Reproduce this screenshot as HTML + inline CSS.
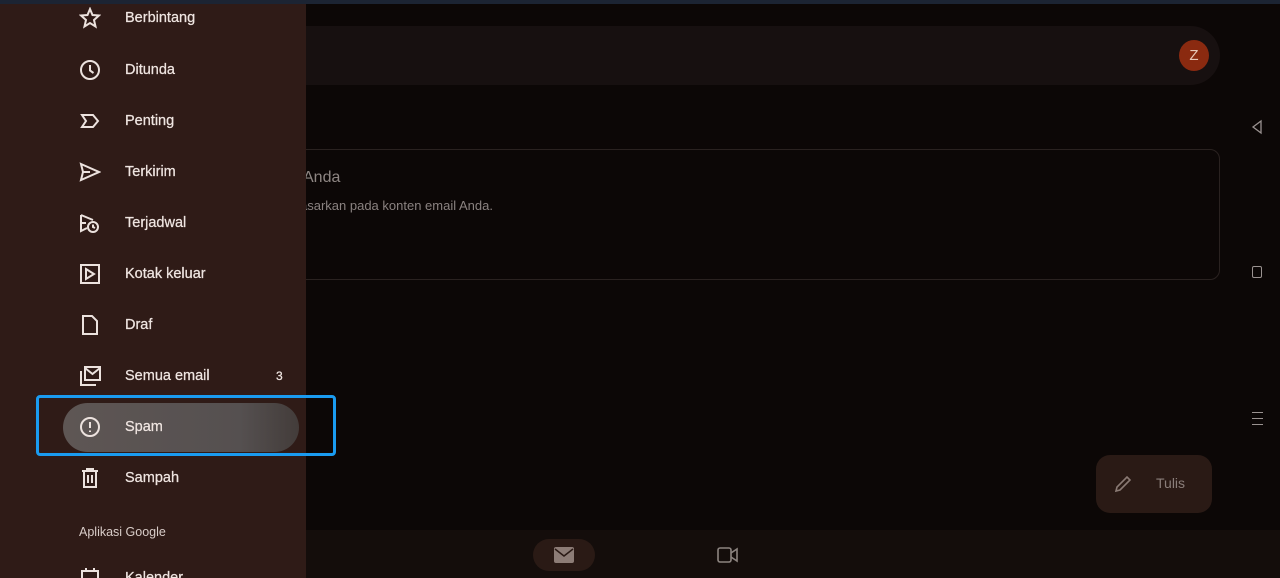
<!DOCTYPE html>
<html style="overflow:hidden"><head><meta charset="utf-8"><style>
*{margin:0;padding:0;box-sizing:border-box}
html,body{width:1280px;height:578px;overflow:hidden}
body{background:#0c0706;font-family:"Liberation Sans",sans-serif;position:relative}
.top{position:absolute;left:0;top:0;width:1280px;height:4px;background:#1c2433;z-index:2}
.side{position:absolute;left:0;top:4px;width:306px;height:574px;background:#2f1b17;overflow:hidden}
.it{position:absolute;left:125px;font-size:14.5px;color:#efe5e1;transform:translateY(-50%);-webkit-text-stroke:0.25px #efe5e1}
.ic{position:absolute;left:79px;width:22px;height:22px;transform:translateY(-50%)}
.ic *{fill:none;stroke:#ece2de;stroke-width:2}
</style></head><body>
<div class="top"></div>
<div style="position:absolute;left:306px;top:26px;width:914px;height:59px;background:#171010;border-radius:0 30px 30px 0"></div>
<div style="position:absolute;left:1179px;top:40px;width:30px;height:31px;border-radius:50%;background:#8a2a10;color:#e8c8b8;font-size:15px;text-align:center;line-height:31px">Z</div>
<div style="position:absolute;left:290px;top:149px;width:930px;height:131px;border:1px solid #2a2220;border-radius:10px"></div>
<div style="position:absolute;left:303px;top:169px;font-size:16px;color:#8e8683">Anda</div>
<div style="position:absolute;left:300px;top:198px;font-size:13px;color:#8a8280">asarkan pada konten email Anda.</div>
<svg style="position:absolute;left:1250px;top:119px" width="14" height="16"><path d="M11 2 L3 8 L11 14 Z" fill="none" stroke="#9a9290" stroke-width="1.3"/></svg>
<div style="position:absolute;left:1252px;top:266px;width:10px;height:12px;border:1.3px solid #9a9290;border-radius:2px"></div>
<div style="position:absolute;left:1252px;top:412px;width:11px;height:13px;border-top:1.3px solid #9a9290;border-bottom:1.3px solid #9a9290"><div style="margin-top:4.5px;height:1.3px;background:#9a9290"></div></div>
<div style="position:absolute;left:1096px;top:455px;width:116px;height:58px;border-radius:14px;background:#2a1a15"></div>
<svg style="position:absolute;left:1112px;top:473px" width="22" height="22"><path d="M4 18 L5 14 L15 4 L18 7 L8 17 Z" fill="none" stroke="#8a7a74" stroke-width="1.6"/></svg>
<div style="position:absolute;left:1156px;top:475px;font-size:14px;color:#8a7e7a">Tulis</div>
<div style="position:absolute;left:306px;top:530px;width:974px;height:48px;background:#140d0b"></div>
<div style="position:absolute;left:533px;top:539px;width:62px;height:32px;border-radius:16px;background:#2a1a15"></div>
<svg style="position:absolute;left:553px;top:546px" width="22" height="18"><rect x="1" y="1" width="20" height="16" rx="2" fill="#8c7c76"/><path d="M2 3 L11 10 L20 3" fill="none" stroke="#2a1a15" stroke-width="1.5"/></svg>
<svg style="position:absolute;left:716px;top:545px" width="24" height="20"><rect x="2" y="3" width="13" height="14" rx="2" fill="none" stroke="#8c8480" stroke-width="1.6"/><path d="M15 8 L21 4 L21 16 L15 12" fill="none" stroke="#8c8480" stroke-width="1.6"/></svg>
<div class="side">
<svg class="ic" style="top:14px" viewBox="0 0 22 22"><path d="M11 2 L13.5 8 L20 8.5 L15 13 L16.5 19.5 L11 16 L5.5 19.5 L7 13 L2 8.5 L8.5 8 Z"/></svg>
<div class="it" style="top:14px">Berbintang</div>
<svg class="ic" style="top:66px" viewBox="0 0 22 22"><circle cx="11" cy="11" r="9"/><path d="M11 6 V11.5 L14.5 14"/></svg>
<div class="it" style="top:66px">Ditunda</div>
<svg class="ic" style="top:117px" viewBox="0 0 22 22"><path d="M3 5 H14 L19 11 L14 17 H3 L7 11 Z"/></svg>
<div class="it" style="top:117px">Penting</div>
<svg class="ic" style="top:168px" viewBox="0 0 22 22"><path d="M2 3 L20 11 L2 19 L4 11 Z M4 11 H11"/></svg>
<div class="it" style="top:168px">Terkirim</div>
<svg class="ic" style="top:219px" viewBox="0 0 22 22"><path d="M2 3 L14 8 M2 3 V19 L8 16 M2 11 H7"/><circle cx="14" cy="15" r="5"/><path d="M14 12.5 V15 L16 16"/></svg>
<div class="it" style="top:219px">Terjadwal</div>
<svg class="ic" style="top:270px" viewBox="0 0 22 22"><rect x="2" y="2" width="18" height="18"/><path d="M7 6 L15 11 L7 16 Z"/></svg>
<div class="it" style="top:270px">Kotak keluar</div>
<svg class="ic" style="top:321px" viewBox="0 0 22 22"><path d="M4 2 H13 L18 7 V20 H4 Z"/></svg>
<div class="it" style="top:321px">Draf</div>
<svg class="ic" style="top:372px" viewBox="0 0 22 22"><path d="M2 6 V20 H17"/><rect x="6" y="2" width="15" height="13"/><path d="M6 3 L13.5 9 L21 3"/></svg>
<div class="it" style="top:372px">Semua email</div>
<div class="it" style="top:372px;left:276px;font-size:12px">3</div>
<div style="position:absolute;left:63px;top:399px;width:236px;height:49px;border-radius:25px;background:linear-gradient(90deg,#5e5654,#555050 75%,#433c3a)"></div>
<svg class="ic" style="top:423px" viewBox="0 0 22 22"><circle cx="11" cy="11" r="9"/><path d="M11 6 V12 M11 14.5 V16"/></svg>
<div class="it" style="top:423px">Spam</div>
<svg class="ic" style="top:474px" viewBox="0 0 22 22"><path d="M3 4 H19 M8 4 V2 H14 V4 M5 4 V20 H17 V4 M9 8 V16 M13 8 V16"/></svg>
<div class="it" style="top:474px">Sampah</div>
<div class="it" style="top:528px;left:79px;font-size:12.5px;color:#d8ccc8;-webkit-text-stroke:0">Aplikasi Google</div>
<svg class="ic" style="top:574px" viewBox="0 0 22 22"><rect x="3" y="4" width="16" height="16" fill="#e8c8c0" stroke="#e8c8c0"/><path d="M7 1 V5 M15 1 V5"/></svg>
<div class="it" style="top:574px">Kalender</div>
</div>
<div style="position:absolute;left:36px;top:395px;width:300px;height:61px;border:3.5px solid #1a9bf0;border-radius:4px"></div>
</body></html>
